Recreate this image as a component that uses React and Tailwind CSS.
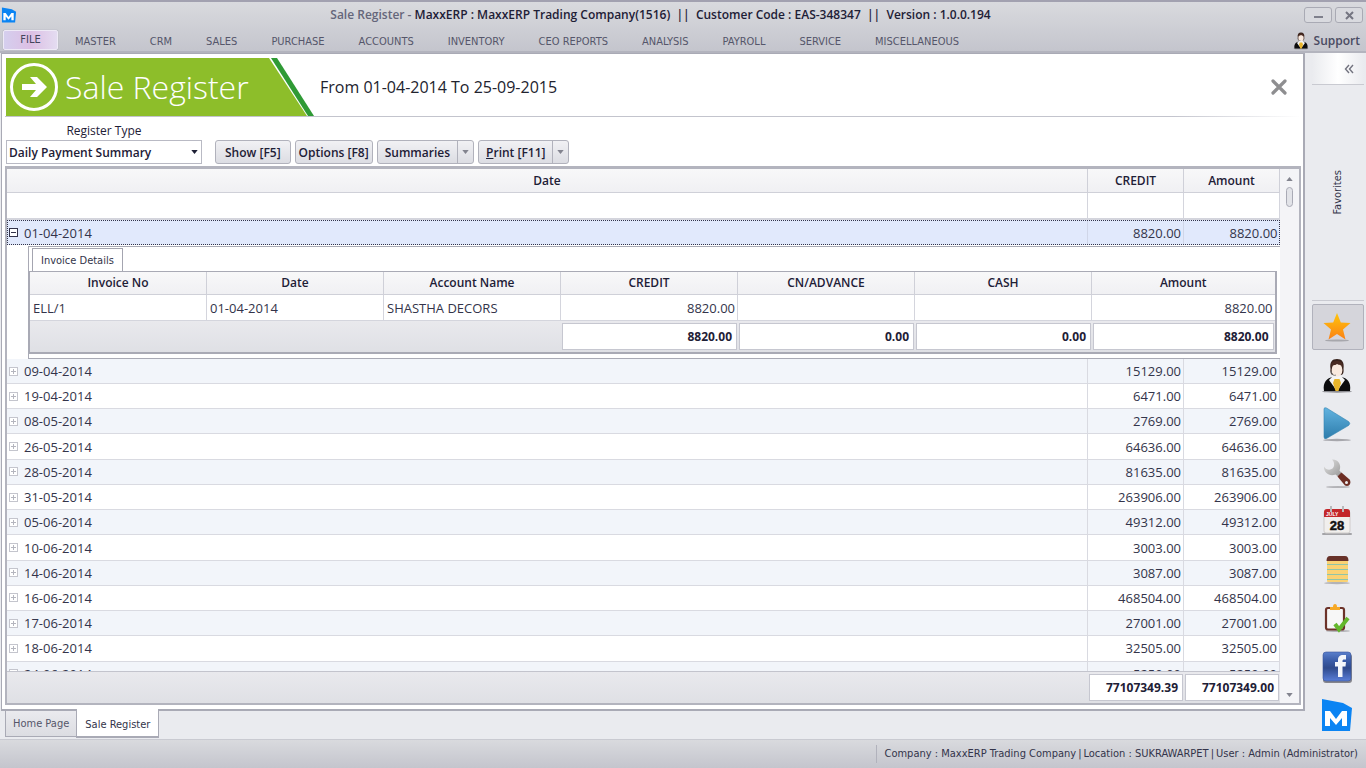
import React from "react";

const menu = ["MASTER", "CRM", "SALES", "PURCHASE", "ACCOUNTS", "INVENTORY", "CEO REPORTS", "ANALYSIS", "PAYROLL", "SERVICE", "MISCELLANEOUS"];

const rows = [
  ["09-04-2014", "15129.00"],
  ["19-04-2014", "6471.00"],
  ["08-05-2014", "2769.00"],
  ["26-05-2014", "64636.00"],
  ["28-05-2014", "81635.00"],
  ["31-05-2014", "263906.00"],
  ["05-06-2014", "49312.00"],
  ["10-06-2014", "3003.00"],
  ["14-06-2014", "3087.00"],
  ["16-06-2014", "468504.00"],
  ["17-06-2014", "27001.00"],
  ["18-06-2014", "32505.00"],
  ["24-06-2014", "5250.00"],
];

function MaxxLogo({ className }) {
  return (
    <svg viewBox="0 0 32 34" className={className} aria-hidden="true">
      <path d="M1 1 L22 5 L31 10 L29 33 H1 Z" fill="#0b84f3" />
      <path d="M4 28 V13 H9 L15 21 L21 13 H26 V28 H21 V20 L15 27 L9 20 V28 Z" fill="#fff" />
    </svg>
  );
}

function Person({ className }) {
  return (
    <svg viewBox="0 0 32 36" className={className} aria-hidden="true">
      <ellipse cx="16" cy="33.500" rx="15" ry="1.200" fill="#8d8d92" />
      <path d="M9.500 11 C8.500 4 11 1 16 1 C21 1 23.500 4 22.500 11 C23 14 22 17 20 17 H12 C10 17 9 14 9.500 11 Z" fill="#38221c" />
      <path d="M3 33 C1.500 24 6 20 12 19 L16 21 L20 19 C26 20 30.500 24 29 33 Z" fill="#0c0c0e" />
      <path d="M12 18 L8 22 L16 33 L24 22 L20 18 Z" fill="#f4f4f4" />
      <path d="M13.500 21 H18.500 L20 25 L17.500 33 H14.500 L12 25 Z" fill="#e9b52b" />
      <ellipse cx="16" cy="12" rx="5.400" ry="6.600" fill="#f9e9de" />
      <path d="M10 10 C11 6 14 8 16 6 C19 8 21 6 22 10 C22 4 20 3 16 3 C12 3 10 4 10 10 Z" fill="#4a2b22" />
      <path d="M10 13 C11 17 13 18 15 17" fill="none" stroke="#777" strokeWidth="1" />
    </svg>
  );
}

function Star() {
  return (
    <svg viewBox="0 0 32 32" className="size-8" aria-hidden="true">
      <defs>
        <linearGradient id="star" x1="0" y1="0" x2="0" y2="1">
          <stop offset="0" stopColor="#ffc60b" />
          <stop offset="1" stopColor="#fb8115" />
        </linearGradient>
      </defs>
      <ellipse cx="16" cy="29.500" rx="12" ry="1" fill="#a7a7ac" />
      <path d="M16 2 L19.800 11.500 L29.500 12 L22 18.500 L24.500 28.500 L16 23 L7.500 28.500 L10 18.500 L2.500 12 L12.200 11.500 Z" fill="url(#star)" />
    </svg>
  );
}

function Play() {
  return (
    <svg viewBox="0 0 32 36" className="h-9 w-8" aria-hidden="true">
      <defs>
        <linearGradient id="play" x1="0" y1="0" x2="0" y2="1">
          <stop offset="0" stopColor="#62b3e0" />
          <stop offset="1" stopColor="#2d7cab" />
        </linearGradient>
      </defs>
      <ellipse cx="16" cy="34" rx="14" ry="1.200" fill="#a7a7ac" />
      <path d="M3 3 Q3 1 5.500 2 L27.500 15.500 Q30 17.500 27.500 19.500 L5.500 32.500 Q3 33.500 3 31 Z" fill="url(#play)" stroke="#3384b2" strokeWidth=".6" />
    </svg>
  );
}

function Wrench() {
  return (
    <svg viewBox="0 0 32 32" className="size-8" aria-hidden="true">
      <defs>
        <linearGradient id="steel" x1="0" y1="0" x2="1" y2="1">
          <stop offset="0" stopColor="#e3e3e3" />
          <stop offset="1" stopColor="#969696" />
        </linearGradient>
      </defs>
      <ellipse cx="17" cy="30" rx="12" ry="1" fill="#b3b3b7" />
      <path d="M11 2.500 C17 2 21 8 18.500 13.500 L21 16.500 L17.500 20 L14.500 17.500 C9 20 2.500 16 3 9.500 C5 13 9 13.500 11.500 11.500 C14 9 13.500 5 11 2.500 Z" fill="url(#steel)" />
      <path d="M16.500 19.500 L20.500 15.500 L28.500 22.500 C31 26 28 30.500 24 28.500 Z" fill="#6d2e24" />
      <circle cx="25.500" cy="25.500" r="1.500" fill="#eee" />
    </svg>
  );
}

function CalendarDay() {
  return (
    <svg viewBox="0 0 32 32" className="size-8" aria-hidden="true">
      <rect x="1" y="28" width="30" height="2" rx="1" fill="#a4a4a8" />
      <rect x="3" y="6" width="26" height="22" rx="2" fill="#f1efed" stroke="#cfcccb" />
      <path d="M3 12 V7 Q3 4 6 4 H26 Q29 4 29 7 V12 Z" fill="#c3272a" />
      <path d="M10 1 V7 M22 1 V7" stroke="#b9b9bb" strokeWidth="2" />
      <text x="5" y="11" fontSize="5" fontWeight="700" fill="#fff" fontFamily="Liberation Sans, sans-serif">JULY</text>
      <text x="16" y="25" fontSize="13" fontWeight="700" textAnchor="middle" fill="#111" stroke="#111" strokeWidth=".5" fontFamily="Liberation Sans, sans-serif">28</text>
    </svg>
  );
}

function Notes() {
  return (
    <svg viewBox="0 0 32 32" className="size-8" aria-hidden="true">
      <ellipse cx="16" cy="29" rx="13" ry="1.200" fill="#b3b3b7" />
      <rect x="6" y="4" width="21" height="24" rx="1" fill="#fad273" />
      <path d="M5.500 7 Q5.500 2 9 2 H24 Q27.500 2 27.500 7 Z" fill="#673129" />
      <path d="M6 10.500 H27 M6 15.500 H27 M6 20.500 H27 M6 25.500 H27" stroke="#8fc4a8" strokeWidth="1.200" />
    </svg>
  );
}

function Tasks() {
  return (
    <svg viewBox="0 0 32 32" className="size-8" aria-hidden="true">
      <ellipse cx="17" cy="29" rx="12" ry="1" fill="#b3b3b7" />
      <rect x="5" y="6" width="18" height="21.500" rx="2" fill="#f7f7f7" stroke="#6c3229" strokeWidth="2.200" />
      <path d="M9 8 V5 H12 Q12 2 14 2 Q16 2 16 5 H19 V8 Z" fill="#f6a826" />
      <path d="M14 22 L18 27.500 L27 16" fill="none" stroke="#64b72c" strokeWidth="4" />
    </svg>
  );
}

function Facebook() {
  return (
    <svg viewBox="0 0 32 32" className="size-8" aria-hidden="true">
      <defs>
        <linearGradient id="fb" x1="0" y1="0" x2="0" y2="1">
          <stop offset="0" stopColor="#5a7fcc" />
          <stop offset=".3" stopColor="#3b5ca8" />
          <stop offset=".55" stopColor="#2f4a8c" />
          <stop offset="1" stopColor="#5a7ed8" />
        </linearGradient>
      </defs>
      <rect x="2" y="3" width="29" height="29" rx="3" fill="#85858c" />
      <rect x="2" y="1" width="28" height="29" rx="3" fill="url(#fb)" stroke="#3a569c" strokeWidth=".6" />
      <path d="M17 26 V15.500 H14 V11 H17 V9 C17 5.500 19 4 22 4 H25 V8.500 H23 C22 8.500 21.500 9 21.500 10 V11 H25 L24.500 15.500 H21.500 V26 Z" fill="#f4f6fb" />
    </svg>
  );
}

function Caret({ className, up }) {
  return (
    <svg viewBox="0 0 8 5" className={className} aria-hidden="true">
      <path d={up ? "M0 5 L4 0 L8 5 Z" : "M0 0 H8 L4 5 Z"} fill="currentColor" />
    </svg>
  );
}

function Expander({ open }) {
  return (
    <button type="button" aria-label={open ? "Collapse row" : "Expand row"} className="block size-[9px]">
      <svg viewBox="0 0 9 9" className="size-[9px]" shapeRendering="crispEdges" aria-hidden="true">
        <rect x=".5" y=".5" width="8" height="8" fill="#fff" stroke={open ? "#33334a" : "#c4c5cd"} />
        <path d={open ? "M2 4.500 H7" : "M2 4.500 H7 M4.500 2 V7"} stroke={open ? "#33334a" : "#b4b5be"} />
      </svg>
    </button>
  );
}

const buttonLook = "flex h-6 rounded-[3px] border border-[#b1b2bc] bg-linear-to-b from-[#f1f1f4] to-[#dcdde3] text-[12px] leading-6 font-semibold text-[#1e2036]";

function SplitButton({ label, children }) {
  return (
    <div className={buttonLook}>
      <button type="button" className="px-[7px]">{children}</button>
      <button type="button" aria-label={label} className="flex w-4 items-center justify-center border-l border-[#b1b2bc] text-[#83848f]">
        <Caret className="h-1 w-[7px]" />
      </button>
    </div>
  );
}

const rail = [
  ["Favorites", <Star />],
  ["Support", <Person className="h-9 w-8" />],
  ["Run", <Play />],
  ["Tools", <Wrench />],
  ["Calendar", <CalendarDay />],
  ["Notes", <Notes />],
  ["Tasks", <Tasks />],
  ["Facebook", <Facebook />],
  ["Maxx", <MaxxLogo className="h-[34px] w-8" />],
];

const detailTotals = ["8820.00", "0.00", "0.00", "8820.00"];

function Columns() {
  return (
    <colgroup>
      <col />
      <col className="w-24" />
      <col className="w-24" />
    </colgroup>
  );
}

function DetailColumns() {
  return (
    <colgroup>
      <col className="w-[177px]" />
      <col className="w-[177px]" />
      <col className="w-[177px]" />
      <col className="w-[177px]" />
      <col className="w-[177px]" />
      <col className="w-[177px]" />
      <col />
    </colgroup>
  );
}

function InvoiceDetails() {
  return (
    <div className="mt-px ml-[21px] flex h-[113px] flex-col border border-r-0 border-[#a9aab5] bg-white">
      <div className="flex h-6 items-end pl-[3px]">
        <button type="button" className="-mb-px h-6 border border-b-0 border-[#a4a5b0] bg-white px-2 pt-px font-['DejaVu_Sans_Condensed','Open_Sans',sans-serif] text-[11px]">Invoice Details</button>
      </div>
      <div className="mr-[3px] border border-r-2 border-b-2 border-[#a9aab5]">
        <table className="w-full table-fixed border-separate border-spacing-0">
          <DetailColumns />
          <thead>
            <tr className="h-[23px] bg-linear-to-b from-[#f8f8f9] to-[#f0f0f3]">
              {["Invoice No", "Date", "Account Name", "CREDIT", "CN/ADVANCE", "CASH", "Amount"].map((h) => (
                <th key={h} className="border-r border-b border-[#cfd0d8] p-0 text-[12px] leading-4 font-semibold text-[#1e2036] last:border-r-0">{h}</th>
              ))}
            </tr>
          </thead>
          <tbody>
            <tr className="h-[26px]">
              {["ELL/1", "01-04-2014", "SHASTHA DECORS"].map((v) => (
                <td key={v} className="border-r border-b border-[#d4d5dd] p-0 pl-[3px] leading-4">{v}</td>
              ))}
              {["8820.00", "", "", "8820.00"].map((v, i) => (
                <td key={i} className="border-r border-b border-[#d4d5dd] p-0 pr-[2px] text-right leading-4 last:border-r-0">{v}</td>
              ))}
            </tr>
          </tbody>
          <tfoot>
            <tr className="h-[31px] bg-linear-to-b from-[#e9e9ed] to-[#dfe0e5]">
              <td colSpan={3} className="p-0" />
              {detailTotals.map((v, i) => (
                <td key={i} className="p-0 pr-px pl-px">
                  <div className="h-[27px] border border-[#c6c7d0] bg-white pr-1 text-right text-[12px] leading-[26px] font-bold text-[#1e2036]">{v}</div>
                </td>
              ))}
            </tr>
          </tfoot>
        </table>
      </div>
    </div>
  );
}

export default function App() {
  return (
    <div className="flex h-screen flex-col overflow-hidden bg-[#eaebef] font-['Open_Sans','Noto_Sans',sans-serif] text-[13px] text-[#33344a]">
      <header className="border-t-2 border-b-2 border-t-[#a2a1b0] border-b-[#b3b4be] bg-linear-to-b from-[#d9dade] to-[#c4c5cd]">
        <div className="flex h-[26px] items-center pr-[3px] pl-px">
          <MaxxLogo className="h-4 w-4" />
          <h1 className="flex-1 text-center text-[12px] font-semibold whitespace-pre text-[#1e2036]">
            <span className="text-[#65667a]">Sale Register - </span>
            MaxxERP : MaxxERP Trading Company(1516)  ||  Customer Code : EAS-348347  ||  Version : 1.0.0.194
          </h1>
          <div className="flex gap-[3px]">
            <button type="button" aria-label="Minimize" className="flex h-4 w-[28px] items-center justify-center rounded-[3px] border border-[#a9aab4] bg-[#d9dadf]">
              <span className="mt-1 h-[2px] w-[9px] bg-[#7f808c]" />
            </button>
            <button type="button" aria-label="Close window" className="flex h-4 w-[28px] items-center justify-center rounded-[3px] border border-[#a9aab4] bg-[#d9dadf]">
              <svg viewBox="0 0 9 9" className="size-[9px]" aria-hidden="true"><path d="M1 1 L8 8 M8 1 L1 8" stroke="#747581" strokeWidth="2" /></svg>
            </button>
          </div>
        </div>
        <nav className="flex h-[23px] items-center pr-[6px] pl-[3px] font-['DejaVu_Sans_Condensed','Open_Sans',sans-serif] text-[11px] text-[#55566a]">
          <button type="button" className="h-5 w-[55px] rounded-[2px] border border-[#eeeaf6] bg-linear-to-r from-[#d5cfee] via-[#dcbfe4] to-[#e4dcf1] pt-px text-[#44455c] shadow-[0_0_1px_#8a8ba0]">FILE</button>
          {menu.map((m) => (
            <button type="button" key={m} className="px-[17px] pt-[6px] whitespace-nowrap">{m}</button>
          ))}
          <button type="button" className="ml-auto flex items-center gap-[5px] pt-[2px] font-['Open_Sans',sans-serif] text-[12px] font-semibold text-[#4a4b62]">
            <Person className="h-[18px] w-4" />
            Support
          </button>
        </nav>
      </header>

      <div className="flex min-h-0 flex-1">
        <div className="flex min-w-0 flex-1 flex-col">
          <main className="ml-px flex min-h-0 flex-1 flex-col border border-r-2 border-b-2 border-[#a9aab5] bg-white pt-1 pr-[2px] pb-1 pl-[3px]">
            <div className="ml-px flex h-[58px] items-center pr-[14px]">
              <div className="relative flex h-full w-[308px] items-center">
                <svg viewBox="0 0 308 58" className="absolute inset-0 h-full w-full" aria-hidden="true">
                  <path d="M0 0 H263 L301 58 H0 Z" fill="#8dbe2a" />
                  <path d="M265 0 H271 L308 58 H302 Z" fill="#2f9a35" />
                  <circle cx="28" cy="29" r="22.500" fill="none" stroke="#fff" strokeWidth="3" />
                  <path d="M16 26 H30 L24 19 H31 L41 29 L31 39 H24 L30 32 H16 Z" fill="#fff" />
                </svg>
                <h2 className="relative pl-[59px] text-[32px] font-light text-white">Sale Register</h2>
              </div>
              <p className="pl-[6px] text-[16px] text-[#22232e]">From 01-04-2014 To 25-09-2015</p>
              <button type="button" aria-label="Close" className="ml-auto">
                <svg viewBox="0 0 16 16" className="size-4" aria-hidden="true"><path d="M2 2 L14 14 M14 2 L2 14" stroke="#8e8e90" strokeWidth="3.200" strokeLinecap="round" /></svg>
              </button>
            </div>
            <div className="h-px bg-linear-to-r from-[#c3c4cd] from-90% to-transparent" />

            <div className="ml-px flex items-end pt-[5px] pb-[2px]">
              <div className="flex w-[196px] flex-col">
                <label htmlFor="register-type" className="text-center text-[12px] leading-[18px] text-[#1e2036]">Register Type</label>
                <div className="relative">
                  <select id="register-type" className="block h-6 w-full appearance-none border border-[#b9bac4] bg-white pt-px pl-[2px] text-[12px] font-semibold text-[#1e2036]">
                    <option>Daily Payment Summary</option>
                  </select>
                  <Caret className="pointer-events-none absolute top-[10px] right-1 h-1 w-[7px] text-[#1e2036]" />
                </div>
              </div>
              <div className="flex gap-1 pl-[13px]">
                <button type="button" className={buttonLook + " px-[9px]"}>Show [F5]</button>
                <button type="button" className={buttonLook + " px-[3px]"}>Options [F8]</button>
                <SplitButton label="Summaries menu">Summaries</SplitButton>
                <SplitButton label="Print menu"><span className="underline">P</span>rint [F11]</SplitButton>
              </div>
            </div>

            <section className="flex min-h-0 flex-1 border-2 border-t-[3px] border-[#b3b4be] bg-white">
              <div className="flex min-w-0 flex-1 flex-col">
                <table className="w-full table-fixed border-collapse">
                  <Columns />
                  <thead>
                    <tr className="h-[23px] bg-linear-to-b from-[#f8f8f9] to-[#f0f0f3]">
                      {["Date", "CREDIT", "Amount"].map((h) => (
                        <th key={h} className="border-r border-b border-[#cfd0d8] p-0 pt-[2px] text-[12px] leading-4 font-semibold text-[#1e2036]">{h}</th>
                      ))}
                    </tr>
                    <tr className="h-[27px]">
                      <td className="border-r border-b-2 border-[#d4d5dd]" />
                      <td className="border-r border-b-2 border-[#d4d5dd]" />
                      <td className="border-r border-b-2 border-[#d4d5dd]" />
                    </tr>
                  </thead>
                </table>
                <div className="min-h-0 flex-1 overflow-hidden">
                  <table className="h-[467px] w-full table-fixed border-collapse">
                    <Columns />
                    <tbody>
                      <tr className="h-[25px] bg-[#e1e9fc] outline-1 -outline-offset-1 outline-dotted outline-[#33344a]">
                        <td className="border-r border-[#d0d6e8] p-0 leading-4"><div className="flex items-center gap-[6px] pl-[2px]"><Expander open />01-04-2014</div></td>
                        <td className="border-r border-[#d0d6e8] p-0 pr-[2px] text-right leading-4">8820.00</td>
                        <td className="p-0 pr-[2px] text-right leading-4">8820.00</td>
                      </tr>
                      <tr className="h-[114px]">
                        <td colSpan={3} className="p-0 align-top"><InvoiceDetails /></td>
                      </tr>
                      {rows.map(([date, value]) => (
                        <tr key={date} className="odd:bg-[#f2f5fa]">
                          <td className="border-r border-b border-[#d9dae1] p-0 leading-4"><div className="flex items-center gap-[6px] pl-[2px]"><Expander />{date}</div></td>
                          <td className="border-r border-b border-[#d9dae1] p-0 pr-[2px] text-right leading-4">{value}</td>
                          <td className="border-r border-b border-[#d9dae1] p-0 pr-[2px] text-right leading-4">{value}</td>
                        </tr>
                      ))}
                    </tbody>
                  </table>
                </div>
                <div className="flex h-8 justify-end gap-[2px] border-t border-[#c3c4cd] bg-linear-to-b from-[#e9e9ed] to-[#dfe0e5] pt-[2px] pr-px pb-[2px]">
                  {["77107349.39", "77107349.00"].map((v) => (
                    <div key={v} className="w-[94px] border border-[#c6c7d0] bg-white pr-1 text-right text-[12px] leading-[26px] font-bold text-[#1e2036]">{v}</div>
                  ))}
                </div>
              </div>
              <div className="flex w-[19px] flex-col items-center bg-[#f4f4f7] pt-2 pb-[6px] text-[#83848f]">
                <Caret up className="h-1 w-[7px]" />
                <div className="mt-[6px] h-5 w-[7px] rounded-full border border-[#a9aab5] bg-[#e2e3e8]" />
                <Caret className="mt-auto h-1 w-[7px]" />
              </div>
            </section>
          </main>
          <div className="flex h-[28px] items-start pl-[5px] font-['DejaVu_Sans_Condensed','Open_Sans',sans-serif] text-[11px]">
            <button type="button" className="h-[26px] border border-t-0 border-r-0 border-[#a9aab5] bg-linear-to-b from-[#eaeaee] to-[#dcdde2] px-[7px] pt-[2px] text-[#55566a]">Home Page</button>
            <button type="button" className="-mt-[2px] h-[29px] border border-t-0 border-b-2 border-[#a9aab5] bg-white px-2 pt-[6px]">Sale Register</button>
          </div>
        </div>

        <aside className="flex w-[61px] flex-col items-end pr-[2px]">
          <button type="button" aria-label="Collapse sidebar" className="flex h-8 w-[52px] items-center justify-end border-b border-[#c9cad1] bg-linear-to-r from-[#eaebef] via-white to-[#eaebef] pr-[10px]">
            <svg viewBox="0 0 10 10" className="size-[10px]" aria-hidden="true"><path d="M5 1 L1.500 5 L5 9 M9 1 L5.500 5 L9 9" fill="none" stroke="#72737f" strokeWidth="1.400" /></svg>
          </button>
          <div className="flex w-[52px] flex-1 items-center justify-center border-b border-[#c9cad1]">
            <span className="rotate-180 font-['DejaVu_Sans_Condensed','Open_Sans',sans-serif] text-[11px] [writing-mode:vertical-rl]">Favorites</span>
          </div>
          <div className="flex h-[438px] flex-col justify-between pt-[3px] pb-px">
            {rail.map(([label, icon], i) => (
              <button
                type="button"
                key={label}
                aria-label={label}
                className={"flex h-[46px] w-[52px] items-center justify-center rounded-[2px] border pr-[2px] " + (i === 0 ? "border-[#b1b2bc] bg-[#d5d5db]" : "border-transparent")}
              >
                {icon}
              </button>
            ))}
          </div>
        </aside>
      </div>

      <footer className="flex h-[29px] items-center justify-end border-t border-[#c9cad1] bg-linear-to-b from-[#d9dade] to-[#c4c5cd] pr-2 font-['DejaVu_Sans_Condensed','Open_Sans',sans-serif] text-[11px]">
        <div className="flex gap-[2px] border-l border-[#b1b2bc] pt-px pl-2">
          <span>Company : MaxxERP Trading Company</span>
          <span>|</span>
          <span>Location : SUKRAWARPET</span>
          <span>|</span>
          <span>User : Admin (Administrator)</span>
        </div>
      </footer>
    </div>
  );
}
